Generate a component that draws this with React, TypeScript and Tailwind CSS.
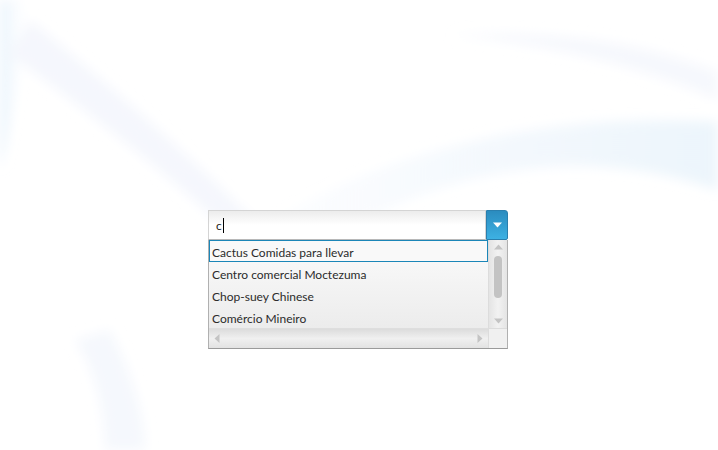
import { useState } from 'react';

const customers = [
  'Cactus Comidas para llevar',
  'Centro comercial Moctezuma',
  'Chop-suey Chinese',
  'Comércio Mineiro',
];

function Backdrop() {
  // faint, soft swooshes behind the control
  return (
    <svg className="absolute inset-0 pointer-events-none" width="718" height="450" viewBox="0 0 718 450">
      <defs>
        <linearGradient id="sw1" x1="0" y1="0" x2="1" y2="0">
          <stop offset="0" stopColor="#f4f8fd" stopOpacity="0" />
          <stop offset="0.55" stopColor="#f1f7fd" />
          <stop offset="1" stopColor="#e8f3fb" />
        </linearGradient>
        <linearGradient id="sw2" x1="0" y1="0" x2="1" y2="0">
          <stop offset="0" stopColor="#e6f2fc" />
          <stop offset="1" stopColor="#f8fbfe" stopOpacity="0" />
        </linearGradient>
        <filter id="soft" x="-20%" y="-20%" width="140%" height="140%">
          <feGaussianBlur stdDeviation="6" />
        </filter>
      </defs>
      <g filter="url(#soft)">
        <path d="M0 0 L26 0 C22 60 14 110 0 170 Z" fill="url(#sw2)" />
        <path d="M200 270 C330 170 500 110 718 122 L718 190 C540 130 380 190 260 290 Z" fill="url(#sw1)" opacity="0.8" />
        <path d="M30 20 C140 110 240 200 330 300 L300 305 C220 215 120 135 10 55 Z" fill="#f5f7fd" />
        <path d="M110 330 C135 380 145 420 145 450 L105 450 C105 410 95 370 75 340 Z" fill="#f5f8fd" />
        <path d="M450 35 C560 45 650 70 718 100 L718 72 C640 42 560 30 450 35 Z" fill="#f6f8fd" />
      </g>
    </svg>
  );
}

export default function App() {
  const [text, setText] = useState('c');
  const [selected, setSelected] = useState(0);

  return (
    <div className="relative w-[718px] h-[450px] overflow-hidden bg-white font-['Lato',sans-serif] text-[12px] text-[#2b2b2b]">
      <Backdrop />
      <div className="relative pt-[210px] pl-[208px]">
        <div className="w-[300px] flex flex-col">
          <div className="flex h-[30px]">
            <label className="flex-1 flex items-center border border-[#d4d4d4] border-b-[#b8b8b8] bg-gradient-to-b from-[#ececec] via-white to-white pl-[7px] pr-[8px] pt-[1px]">
              <input
                value={text}
                onChange={(e) => setText(e.target.value)}
                size={1}
                className="bg-transparent outline-none text-[12px] text-[#222] caret-black w-[7px]"
              />
              {/* caret as drawn in the screenshot */}
              <span className="w-px h-[15px] bg-black" />
            </label>
            <button className="w-[22px] flex items-center justify-center rounded-tr-[3px] rounded-br-[2px] border border-[#2a7fae] bg-gradient-to-b from-[#2b8cbf] to-[#3db1e3]">
              <svg width="9" height="6" viewBox="0 0 9 6">
                <path d="M0 0.5 H9 L4.5 5.5 Z" fill="#fff" />
              </svg>
            </button>
          </div>

          <div className="flex flex-col border border-t-0 border-[#b0b0b0] border-b-[#9a9a9a]">
            <div className="flex">
              <ul className="flex-1 bg-gradient-to-b from-[#fbfbfb] to-[#ececec]">
                {customers.map((name, i) => (
                  <li
                    key={name}
                    onClick={() => setSelected(i)}
                    className={
                      i === selected
                        ? 'h-[22px] flex items-center pl-[2px] pt-[3px] border border-[#1b86b8] bg-[#f9f9f9]'
                        : 'h-[22px] flex items-center pl-[3px] pt-[3px]'
                    }
                  >
                    {name}
                  </li>
                ))}
              </ul>
              <div className="w-[19px] flex flex-col items-center border-l border-[#dcdcdc] bg-gradient-to-r from-[#e4e4e4] via-[#f2f2f2] to-[#e4e4e4] py-[4px]">
                <svg width="9" height="6" viewBox="0 0 9 6" className="mb-[6px]">
                  <path d="M0 5.5 H9 L4.5 0.5 Z" fill="#c4c4c4" />
                </svg>
                <div className="w-[8px] h-[42px] rounded-[4px] bg-[#c3c3c3]" />
                <div className="flex-1" />
                <svg width="9" height="6" viewBox="0 0 9 6">
                  <path d="M0 0.5 H9 L4.5 5.5 Z" fill="#c4c4c4" />
                </svg>
              </div>
            </div>
            <div className="flex h-[20px]">
              <div className="flex-1 flex items-center justify-between px-[5px] border-t border-[#dedede] bg-gradient-to-b from-[#dcdcdc] via-[#f0f0f0] to-[#e2e2e2]">
                <svg width="6" height="9" viewBox="0 0 6 9">
                  <path d="M5.5 0 V9 L0.5 4.5 Z" fill="#c4c4c4" />
                </svg>
                <svg width="6" height="9" viewBox="0 0 6 9">
                  <path d="M0.5 0 V9 L5.5 4.5 Z" fill="#c4c4c4" />
                </svg>
              </div>
              <div className="w-[19px] border-l border-t border-[#dcdcdc] bg-[#f0f0f0]" />
            </div>
          </div>
        </div>
      </div>
    </div>
  );
}
